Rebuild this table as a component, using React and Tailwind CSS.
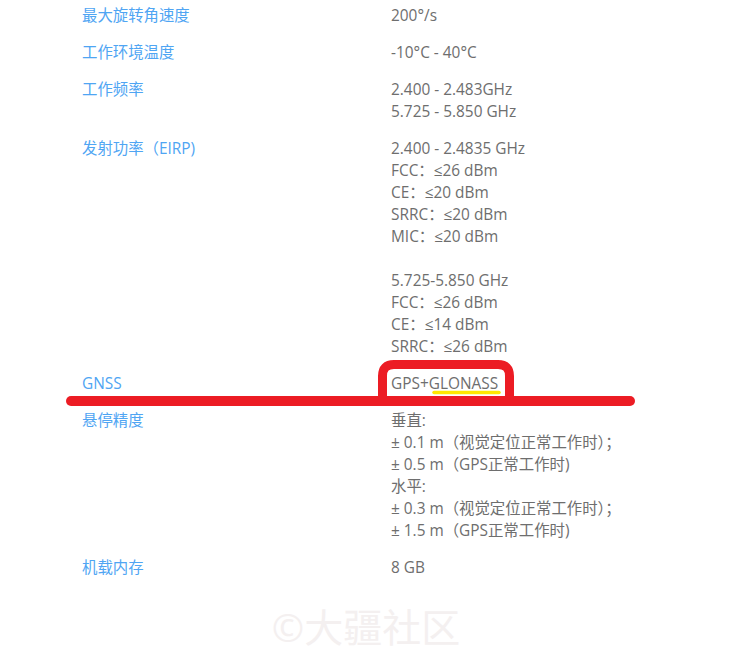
const font = { fontFamily: '"Open Sans", "Noto Sans CJK SC", sans-serif' };

const specs = [
  ["最大旋转角速度", ["200°/s"]],
  ["工作环境温度", ["-10°C - 40°C"]],
  ["工作频率", ["2.400 - 2.483GHz", "5.725 - 5.850 GHz"]],
  [
    "发射功率（EIRP)",
    [
      "2.400 - 2.4835 GHz",
      "FCC：≤26 dBm",
      "CE：≤20 dBm",
      "SRRC：≤20 dBm",
      "MIC：≤20 dBm",
      "",
      "5.725-5.850 GHz",
      "FCC：≤26 dBm",
      "CE：≤14 dBm",
      "SRRC：≤26 dBm",
    ],
  ],
  ["GNSS", ["GPS+GLONASS"]],
  [
    "悬停精度",
    [
      "垂直:",
      "± 0.1 m（视觉定位正常工作时）；",
      "± 0.5 m（GPS正常工作时)",
      "水平:",
      "± 0.3 m（视觉定位正常工作时）；",
      "± 1.5 m（GPS正常工作时)",
    ],
  ],
  ["机载内存", ["8 GB"]],
];

function SpecRow({ label, values }) {
  return (
    <div className="grid grid-cols-[309px_1fr] text-[15.4px] leading-[22px]">
      <div className="text-[#4fa5f3]">{label}</div>
      <div className="text-[#6e6e6e]">
        {values.map((v, i) => (
          <div key={i} className="h-[22px] whitespace-nowrap">
            {v}
          </div>
        ))}
      </div>
    </div>
  );
}

export default function App() {
  return (
    <div className="relative w-[734px] h-[654px] bg-white overflow-hidden" style={font}>
      <div className="flex flex-col gap-[15px] pl-[82px] pt-[5px]">
        {specs.map(([label, values]) => (
          <SpecRow key={label} label={label} values={values} />
        ))}
      </div>

      <div className="flex justify-center pt-[28px]">
        <span className="text-[39px] leading-none text-[#f4f0f0] ml-[-2px]">©大疆社区</span>
      </div>

      {/* hand-drawn annotation */}
      <svg className="absolute left-0 top-0 pointer-events-none" width="734" height="654">
        <path
          d="M387 401 L382.5 401 L382.5 376 Q382.5 364.5 394 364.5 L498 364.5 Q509.5 364.5 509.5 376 L509.5 401"
          fill="none"
          stroke="#ec1c24"
          strokeWidth="9"
          strokeLinejoin="round"
        />
        <line x1="71" y1="401" x2="630" y2="401" stroke="#ec1c24" strokeWidth="10" strokeLinecap="round" />
        <line x1="434" y1="392.5" x2="499" y2="392.5" stroke="#ffe800" strokeWidth="3.5" strokeLinecap="round" />
      </svg>
    </div>
  );
}
